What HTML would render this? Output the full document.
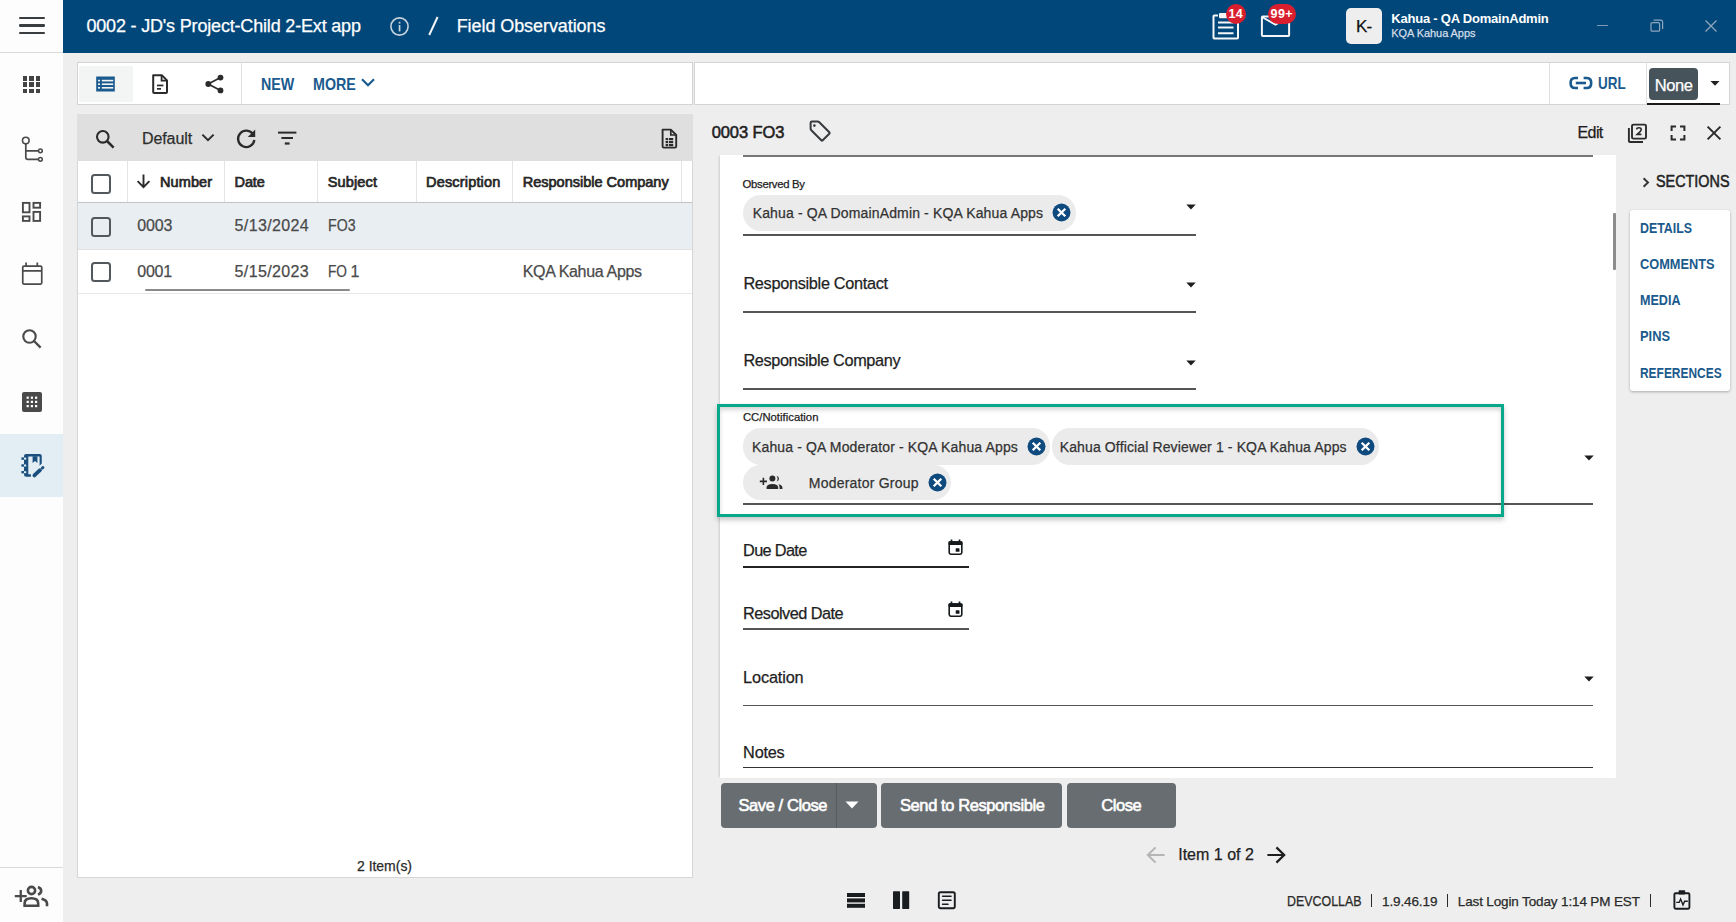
<!DOCTYPE html>
<html><head><meta charset="utf-8"><style>
html,body{margin:0;padding:0;width:1736px;height:922px;overflow:hidden;background:#EEEEEE;font-family:"Liberation Sans",sans-serif;}
.r{position:absolute;box-sizing:border-box;}
.t{position:absolute;white-space:nowrap;line-height:1;-webkit-text-stroke:0.25px currentColor;}
</style></head><body>
<div class="r" style="left:0px;top:0px;width:63px;height:922px;background:#FDFDFD;"></div>
<div class="r" style="left:0px;top:52px;width:63px;height:1px;background:#DADADA;"></div>
<div class="r" style="left:18.5px;top:16.8px;width:26.5px;height:2.3999999999999986px;background:#3A3D40;border-radius:1.2px"></div>
<div class="r" style="left:18.5px;top:24.3px;width:26.5px;height:2.3999999999999986px;background:#3A3D40;border-radius:1.2px"></div>
<div class="r" style="left:18.5px;top:31.8px;width:26.5px;height:2.400000000000002px;background:#3A3D40;border-radius:1.2px"></div>
<div class="r" style="left:22.7px;top:76.0px;width:4.599999999999998px;height:4.599999999999994px;background:#444;"></div>
<div class="r" style="left:22.7px;top:82.4px;width:4.599999999999998px;height:4.599999999999994px;background:#444;"></div>
<div class="r" style="left:22.7px;top:88.8px;width:4.599999999999998px;height:4.599999999999994px;background:#444;"></div>
<div class="r" style="left:29.1px;top:76.0px;width:4.600000000000001px;height:4.599999999999994px;background:#444;"></div>
<div class="r" style="left:29.1px;top:82.4px;width:4.600000000000001px;height:4.599999999999994px;background:#444;"></div>
<div class="r" style="left:29.1px;top:88.8px;width:4.600000000000001px;height:4.599999999999994px;background:#444;"></div>
<div class="r" style="left:35.5px;top:76.0px;width:4.600000000000001px;height:4.599999999999994px;background:#444;"></div>
<div class="r" style="left:35.5px;top:82.4px;width:4.600000000000001px;height:4.599999999999994px;background:#444;"></div>
<div class="r" style="left:35.5px;top:88.8px;width:4.600000000000001px;height:4.599999999999994px;background:#444;"></div>
<svg class="r" style="left:18px;top:132px;" width="28" height="32" viewBox="0 0 28 32"><circle cx="7.8" cy="8.6" r="3.3" fill="none" stroke="#4A4A4A" stroke-width="1.6"/><path d="M7.8 11.9V25.2Q7.8 27.3 9.9 27.3H20.4M7.8 18.8H20.4" fill="none" stroke="#4A4A4A" stroke-width="1.7"/><circle cx="22.4" cy="18.8" r="1.9" fill="none" stroke="#4A4A4A" stroke-width="1.5"/><circle cx="22.4" cy="27.3" r="1.9" fill="none" stroke="#4A4A4A" stroke-width="1.5"/></svg>
<svg class="r" style="left:21px;top:201px;" width="22" height="22" viewBox="0 0 22 22"><g fill="none" stroke="#4A4A4A" stroke-width="1.9"><rect x="1.9" y="1.9" width="6.6" height="9.4"/><rect x="12.5" y="1.9" width="6.6" height="4.8"/><rect x="1.9" y="15.4" width="6.6" height="4.5"/><rect x="12.5" y="10.9" width="6.6" height="9"/></g></svg>
<svg class="r" style="left:21px;top:262px;" width="22" height="24" viewBox="0 0 22 24"><g fill="none" stroke="#4A4A4A" stroke-width="1.7"><rect x="1.75" y="4.05" width="19" height="18" rx="1.2"/><path d="M1.75 8.8H20.75M5.1 0.6V4.5M16.3 0.6V4.5"/></g></svg>
<svg class="r" style="left:20px;top:327px;" width="24" height="24" viewBox="0 0 24 24"><circle cx="9.5" cy="9.5" r="6.2" fill="none" stroke="#4A4A4A" stroke-width="2.1"/><path d="M14 14L20.6 20.6" stroke="#4A4A4A" stroke-width="2.4"/></svg>
<svg class="r" style="left:21px;top:391px;" width="22" height="22" viewBox="0 0 22 22"><rect x="1" y="1" width="20" height="20" rx="2" fill="#4A4A4A"/><rect x="5.6" y="5.6" width="2.2" height="2.2" fill="#fff"/><rect x="5.6" y="9.8" width="2.2" height="2.2" fill="#fff"/><rect x="5.6" y="14.0" width="2.2" height="2.2" fill="#fff"/><rect x="9.8" y="5.6" width="2.2" height="2.2" fill="#fff"/><rect x="9.8" y="9.8" width="2.2" height="2.2" fill="#fff"/><rect x="9.8" y="14.0" width="2.2" height="2.2" fill="#fff"/><rect x="14.0" y="5.6" width="2.2" height="2.2" fill="#fff"/><rect x="14.0" y="9.8" width="2.2" height="2.2" fill="#fff"/><rect x="14.0" y="14.0" width="2.2" height="2.2" fill="#fff"/></svg>
<div class="r" style="left:0px;top:434px;width:63px;height:63px;background:#E3EEF4;"></div>
<svg class="r" style="left:14px;top:446px;" width="36" height="40" viewBox="0 0 36 40"><g fill="#1B4F7E"><path d="M12 8H25.75Q27.75 8 27.75 10V17.6L25.6 19.8V10.4H14.3V28.2H16.9V30.8H12.2Q10 30.8 10 28.6V10Q10 8 12 8Z"/><path d="M18.6 10.2H23.4V16.9L21 15.1 18.6 16.9Z"/><rect x="7.4" y="11.4" width="2.6" height="2.4"/><rect x="7.4" y="18.3" width="2.6" height="2.4"/><rect x="7.4" y="25" width="2.6" height="2.4"/></g><g fill="#E3EEF4"><rect x="10" y="11.6" width="2.2" height="2"/><rect x="10" y="18.5" width="2.2" height="2"/><rect x="10" y="25.2" width="2.2" height="2"/></g><g stroke="#1B4F7E" stroke-linecap="round" fill="none"><path d="M20.4 29.4L26 24.2" stroke-width="3.8"/><path d="M28.4 22L28.9 21.5" stroke-width="3"/></g></svg>
<div class="r" style="left:0px;top:867px;width:63px;height:1px;background:#DADADA;"></div>
<svg class="r" style="left:13px;top:884px;" width="37" height="24" viewBox="0 0 37 24"><g fill="#4A4A4A"><path d="M1.8 10.9H6.6V6.1H8.9V10.9H13.7V13.2H8.9V18H6.6V13.2H1.8Z"/></g><g fill="none" stroke="#4A4A4A" stroke-width="2.6"><circle cx="18.5" cy="6.5" r="3.6"/><path d="M11.6 21.8V19.4Q11.6 14.3 18.4 14.3Q25.2 14.3 25.2 19.4V21.8Z"/><path d="M25 3Q28.2 4.4 28.2 6.8Q28.2 9.4 25 10.6"/><path d="M28.5 14.8Q34 16.2 34 19.6V22.2"/></g></svg>
<div class="r" style="left:63px;top:0px;width:1673px;height:53px;background:#02477A;"></div>
<div class="t" style="left:86.4px;top:17.36px;font-size:18px;font-weight:400;color:#FFFFFF;letter-spacing:-0.176px;">0002 - JD's Project-Child 2-Ext app</div>
<svg class="r" style="left:389px;top:16px;" width="21" height="21" viewBox="0 0 21 21"><circle cx="10.5" cy="10.5" r="8.6" fill="none" stroke="#C9D3DD" stroke-width="1.6"/><rect x="9.7" y="9" width="1.7" height="6.4" fill="#C9D3DD"/><rect x="9.7" y="5.8" width="1.7" height="1.8" fill="#C9D3DD"/></svg>
<svg class="r" style="left:426px;top:16px;" width="15" height="20" viewBox="0 0 15 20"><path d="M11.6 1L3.2 19" stroke="#F2F5F8" stroke-width="2"/></svg>
<div class="t" style="left:456.7px;top:17.46px;font-size:18px;font-weight:400;color:#FFFFFF;letter-spacing:-0.076px;">Field Observations</div>
<svg class="r" style="left:1211px;top:12px;" width="30" height="29" viewBox="0 0 30 29"><g fill="none" stroke="#F4F6F8" stroke-width="2"><path d="M7 3.5H3.2Q2.5 3.5 2.5 4.2V25.8Q2.5 26.5 3.2 26.5H26.2Q27 26.5 27 25.8V4.2Q27 3.5 26.2 3.5H22"/><path d="M7 10.5H22.5M7 15.5H22.5M7 21.3H22.5"/></g><rect x="8" y="1" width="13" height="5.2" rx="1" fill="#F4F6F8"/></svg>
<svg class="r" style="left:1259px;top:12px;" width="34" height="28" viewBox="0 0 34 28"><g fill="none" stroke="#F4F6F8" stroke-width="2"><rect x="2.9" y="4.6" width="27.2" height="19.4" rx="0.8"/><path d="M3 5L16.5 12.6 30 5"/></g></svg>
<div class="r" style="left:1226px;top:3.5px;width:20px;height:20.0px;background:#D91F2D;border-radius:10px"></div>
<div class="t" style="left:1228.6px;top:8.02px;font-size:12.5px;font-weight:700;color:#FFFFFF;letter-spacing:0.248px;-webkit-text-stroke:0;">14</div>
<div class="r" style="left:1268px;top:3.5px;width:27.5px;height:20.0px;background:#D91F2D;border-radius:10px"></div>
<div class="t" style="left:1270.5px;top:8.02px;font-size:12.5px;font-weight:700;color:#FFFFFF;letter-spacing:0.432px;-webkit-text-stroke:0;">99+</div>
<div class="r" style="left:1346px;top:8px;width:36px;height:36px;background:#EEEEEE;border-radius:5px"></div>
<div class="t" style="left:1356.0px;top:18.11px;font-size:17px;font-weight:400;color:#111111;letter-spacing:-0.751px;">K-</div>
<div class="t" style="left:1391.3px;top:12.00px;font-size:13px;font-weight:700;color:#FFFFFF;letter-spacing:-0.215px;-webkit-text-stroke:0;">Kahua - QA DomainAdmin</div>
<div class="t" style="left:1391.3px;top:27.59px;font-size:11px;font-weight:400;color:#D6DEE7;letter-spacing:-0.065px;">KQA Kahua Apps</div>
<div class="r" style="left:1597px;top:25px;width:11px;height:1.3000000000000007px;background:#7F9AB4;"></div>
<svg class="r" style="left:1649px;top:18px;" width="16" height="15" viewBox="0 0 16 15"><g fill="none" stroke="#8FA6BD" stroke-width="1.2"><rect x="2" y="4.6" width="8.6" height="8.6" rx="1.3"/><path d="M4.6 2.2H11.8Q13.6 2.2 13.6 4V11"/></g></svg>
<svg class="r" style="left:1704px;top:19px;" width="14" height="14" viewBox="0 0 14 14"><path d="M1.5 1.5L12.5 12.5M12.5 1.5L1.5 12.5" stroke="#8FA6BD" stroke-width="1.3"/></svg>
<div class="r" style="left:77px;top:62px;width:616px;height:43px;background:#FFFFFF;border:1px solid #D4D4D4"></div>
<div class="r" style="left:78.5px;top:65.5px;width:54.0px;height:36.0px;background:#F3F5F5;"></div>
<svg class="r" style="left:95px;top:75px;" width="21" height="18" viewBox="0 0 21 18"><rect x="1.2" y="1.5" width="18.6" height="15" fill="#1B5A8E"/><g fill="#F3F5F5"><rect x="3" y="4.8" width="2" height="1.6"/><rect x="6.8" y="4.8" width="11.4" height="1.6"/><rect x="3" y="8.4" width="2" height="1.6"/><rect x="6.8" y="8.4" width="11.4" height="1.6"/><rect x="3" y="12" width="2" height="1.6"/><rect x="6.8" y="12" width="11.4" height="1.6"/></g></svg>
<svg class="r" style="left:150px;top:73px;" width="20" height="22" viewBox="0 0 20 22"><path d="M3.2 2.2H11.8L17 7.4V19Q17 20 16 20H4.2Q3.2 20 3.2 19Z" fill="none" stroke="#2B2B2B" stroke-width="2" stroke-linejoin="round"/><path d="M11.6 2.4V7.6H16.8" fill="none" stroke="#2B2B2B" stroke-width="1.8"/><rect x="7" y="11.6" width="6.4" height="1.7" fill="#2B2B2B"/><rect x="7" y="15" width="4" height="1.7" fill="#2B2B2B"/></svg>
<svg class="r" style="left:204px;top:73px;" width="21" height="22" viewBox="0 0 21 22"><g fill="#2B2B2B"><circle cx="16.5" cy="4.6" r="2.9"/><circle cx="4.3" cy="11" r="2.9"/><circle cx="16.5" cy="17.4" r="2.9"/></g><path d="M16.5 4.6L4.3 11 16.5 17.4" fill="none" stroke="#2B2B2B" stroke-width="1.7"/></svg>
<div class="r" style="left:241px;top:63px;width:1px;height:41px;background:#E0E0E0;"></div>
<div class="t" style="left:261.0px;top:75.83px;font-size:16.5px;font-weight:700;color:#1B5A8E;letter-spacing:0.000px;-webkit-text-stroke:0;transform:scaleX(0.8650);transform-origin:0 0;">NEW</div>
<div class="t" style="left:313.3px;top:75.83px;font-size:16.5px;font-weight:700;color:#1B5A8E;letter-spacing:0.000px;-webkit-text-stroke:0;transform:scaleX(0.8646);transform-origin:0 0;">MORE</div>
<svg class="r" style="left:360px;top:77px;" width="16" height="11" viewBox="0 0 16 11"><path d="M2 2.2L8 8.2 14 2.2" fill="none" stroke="#1B5A8E" stroke-width="2.2"/></svg>
<div class="r" style="left:694px;top:62px;width:1036px;height:43px;background:#FFFFFF;border:1px solid #D4D4D4"></div>
<div class="r" style="left:1548.5px;top:63px;width:1.0px;height:41px;background:#E0E0E0;"></div>
<svg class="r" style="left:1568px;top:75px;" width="26" height="16" viewBox="0 0 26 16"><g fill="none" stroke="#1B5A8E" stroke-width="2.6"><path d="M10 3H7Q2.6 3 2.6 8Q2.6 13 7 13H10"/><path d="M15.6 3H18.8Q23.2 3 23.2 8Q23.2 13 18.8 13H15.6"/><path d="M7.8 8H18"/></g></svg>
<div class="t" style="left:1597.9px;top:75.43px;font-size:16.5px;font-weight:700;color:#1B5A8E;letter-spacing:0.000px;-webkit-text-stroke:0;transform:scaleX(0.8168);transform-origin:0 0;">URL</div>
<div class="r" style="left:1645.5px;top:63px;width:1.0px;height:41px;background:#E0E0E0;"></div>
<div class="r" style="left:1648.8px;top:68px;width:49.200000000000045px;height:32px;background:#47535B;border-radius:4px"></div>
<div class="t" style="left:1654.8px;top:76.93px;font-size:16.5px;font-weight:400;color:#FFFFFF;letter-spacing:-0.462px;">None</div>
<div class="r" style="left:1647px;top:102.5px;width:73px;height:2.0px;background:#1A1A1A;"></div>
<svg class="r" style="left:1709px;top:79px;" width="12" height="8" viewBox="0 0 12 8"><path d="M1.5 2H10.5L6 6.8Z" fill="#222"/></svg>
<div class="r" style="left:77px;top:114px;width:616px;height:764px;background:#FFFFFF;border:1px solid #D6D6D6;border-top:none"></div>
<div class="r" style="left:77px;top:114px;width:616px;height:46.5px;background:#DFDFDF;"></div>
<svg class="r" style="left:94px;top:128px;" width="22" height="22" viewBox="0 0 22 22"><circle cx="8.8" cy="8.8" r="5.8" fill="none" stroke="#2B2B2B" stroke-width="2.1"/><path d="M13 13L19.6 19.6" stroke="#2B2B2B" stroke-width="2.5"/></svg>
<div class="t" style="left:142.0px;top:130.56px;font-size:16px;font-weight:400;color:#2E2E2E;letter-spacing:-0.099px;">Default</div>
<svg class="r" style="left:199px;top:131px;" width="18" height="13" viewBox="0 0 18 13"><path d="M3.4 3.6L9 9.2 14.6 3.6" fill="none" stroke="#2B2B2B" stroke-width="2"/></svg>
<svg class="r" style="left:234.2px;top:127px;" width="24" height="23" viewBox="0 0 24 23"><path d="M19.2 7.4A8.2 8.2 0 1 0 20.4 13" fill="none" stroke="#2B2B2B" stroke-width="2.3"/><path d="M21.2 2.6V10H13.8Z" fill="#2B2B2B"/></svg>
<svg class="r" style="left:276px;top:129px;" width="22" height="18" viewBox="0 0 22 18"><g fill="#2B2B2B"><rect x="2" y="2.6" width="18.4" height="2"/><rect x="5.4" y="8" width="11.6" height="2"/><rect x="8.8" y="13.4" width="4.8" height="2.2"/></g></svg>
<svg class="r" style="left:660px;top:128px;" width="19" height="21" viewBox="0 0 19 21"><path d="M2.6 1.6H10.8L16.2 7V18.4Q16.2 19.6 15 19.6H3.8Q2.6 19.6 2.6 18.4Z" fill="none" stroke="#2B2B2B" stroke-width="1.9" stroke-linejoin="round"/><path d="M10.8 1.8V7H16" fill="none" stroke="#2B2B2B" stroke-width="1.7"/><g fill="#2B2B2B"><rect x="5.6" y="10" width="2.6" height="2.2"/><rect x="9" y="10" width="4.2" height="2.2"/><rect x="5.6" y="13" width="2.6" height="2.2"/><rect x="9" y="13" width="4.2" height="2.2"/><rect x="5.6" y="16" width="2.6" height="2.2"/><rect x="9" y="16" width="4.2" height="2.2"/></g></svg>
<div class="r" style="left:78px;top:160.5px;width:614px;height:41.5px;background:#FFFFFF;"></div>
<div class="r" style="left:127px;top:160.5px;width:1px;height:41.5px;background:#E4E4E4;"></div>
<div class="r" style="left:224px;top:160.5px;width:1px;height:41.5px;background:#E4E4E4;"></div>
<div class="r" style="left:317px;top:160.5px;width:1px;height:41.5px;background:#E4E4E4;"></div>
<div class="r" style="left:416px;top:160.5px;width:1px;height:41.5px;background:#E4E4E4;"></div>
<div class="r" style="left:512px;top:160.5px;width:1px;height:41.5px;background:#E4E4E4;"></div>
<div class="r" style="left:681px;top:160.5px;width:1px;height:41.5px;background:#E4E4E4;"></div>
<div class="r" style="left:78px;top:201.5px;width:614px;height:1.5px;background:#C4C4C4;box-shadow:0 1px 3px rgba(0,0,0,0.12)"></div>
<div class="r" style="left:90.5px;top:173.5px;width:20.0px;height:20.0px;background:transparent;border:2px solid #53585C;border-radius:3.5px"></div>
<svg class="r" style="left:135px;top:173px;" width="17" height="16" viewBox="0 0 17 16"><path d="M8.5 1.5V14M2.6 8.2L8.5 14.2 14.4 8.2" fill="none" stroke="#2B2B2B" stroke-width="1.9"/></svg>
<div class="t" style="left:160.0px;top:174.63px;font-size:14.5px;font-weight:400;color:#262626;letter-spacing:0.104px;-webkit-text-stroke:0.7px #262626">Number</div>
<div class="t" style="left:234.6px;top:174.63px;font-size:14.5px;font-weight:400;color:#262626;letter-spacing:-0.157px;-webkit-text-stroke:0.7px #262626">Date</div>
<div class="t" style="left:327.7px;top:174.63px;font-size:14.5px;font-weight:400;color:#262626;letter-spacing:0.162px;-webkit-text-stroke:0.7px #262626">Subject</div>
<div class="t" style="left:426.0px;top:174.63px;font-size:14.5px;font-weight:400;color:#262626;letter-spacing:0.179px;-webkit-text-stroke:0.7px #262626">Description</div>
<div class="t" style="left:522.7px;top:174.63px;font-size:14.5px;font-weight:400;color:#262626;letter-spacing:0.006px;-webkit-text-stroke:0.7px #262626">Responsible Company</div>
<div class="r" style="left:78px;top:203px;width:614px;height:45.5px;background:#E9EEF2;"></div>
<div class="r" style="left:78px;top:248.5px;width:614px;height:1.0px;background:#E2E2E2;"></div>
<div class="r" style="left:78px;top:292.5px;width:614px;height:1.0px;background:#E8E8E8;"></div>
<div class="r" style="left:90.5px;top:216.5px;width:20.0px;height:20.0px;background:transparent;border:2px solid #53585C;border-radius:3.5px"></div>
<div class="r" style="left:90.5px;top:261.8px;width:20.0px;height:20.0px;background:transparent;border:2px solid #53585C;border-radius:3.5px"></div>
<div class="t" style="left:137.3px;top:218.46px;font-size:16px;font-weight:400;color:#4A4A4A;letter-spacing:-0.149px;">0003</div>
<div class="t" style="left:234.6px;top:218.46px;font-size:16px;font-weight:400;color:#4A4A4A;letter-spacing:0.358px;">5/13/2024</div>
<div class="t" style="left:328.0px;top:218.46px;font-size:16px;font-weight:400;color:#4A4A4A;letter-spacing:0.000px;transform:scaleX(0.8837);transform-origin:0 0;">FO3</div>
<div class="t" style="left:137.3px;top:263.86px;font-size:16px;font-weight:400;color:#4A4A4A;letter-spacing:-0.274px;">0001</div>
<div class="t" style="left:234.6px;top:263.86px;font-size:16px;font-weight:400;color:#4A4A4A;letter-spacing:0.358px;">5/15/2023</div>
<div class="t" style="left:328.3px;top:263.86px;font-size:16px;font-weight:400;color:#4A4A4A;letter-spacing:0.000px;transform:scaleX(0.8551);transform-origin:0 0;">FO</div>
<div class="t" style="left:350.6px;top:263.86px;font-size:16px;font-weight:400;color:#4A4A4A;letter-spacing:0.000px;">1</div>
<div class="t" style="left:522.7px;top:263.86px;font-size:16px;font-weight:400;color:#4A4A4A;letter-spacing:-0.332px;">KQA Kahua Apps</div>
<div class="r" style="left:145px;top:288.5px;width:205px;height:2.5px;background:#8A8A8A;border-radius:2px"></div>
<div class="t" style="left:357.0px;top:858.75px;font-size:14px;font-weight:400;color:#2A2A2A;letter-spacing:-0.025px;">2 Item(s)</div>
<div class="r" style="left:693px;top:105px;width:1043px;height:817px;background:#EEEEEE;"></div>
<div class="t" style="left:711.7px;top:124.33px;font-size:16.5px;font-weight:400;color:#1E1E1E;letter-spacing:-0.098px;-webkit-text-stroke:0.55px #1E1E1E">0003 FO3</div>
<svg class="r" style="left:807px;top:119px;" width="26" height="25" viewBox="0 0 26 25"><path d="M5 2.6H10.6Q11.6 2.6 12.3 3.3L22.3 13.3Q23 14 22.3 14.7L15.7 21.3Q15 22 14.3 21.3L4.3 11.3Q3.6 10.6 3.6 9.6V4Q3.6 2.6 5 2.6Z" fill="none" stroke="#383B3E" stroke-width="2" stroke-linejoin="round"/><circle cx="7.4" cy="6.6" r="1.3" fill="#383B3E"/></svg>
<div class="t" style="left:1577.6px;top:125.16px;font-size:16px;font-weight:400;color:#1E1E1E;letter-spacing:-0.643px;">Edit</div>
<svg class="r" style="left:1626px;top:122px;" width="22" height="22" viewBox="0 0 22 22"><g fill="none" stroke="#2B2B2B" stroke-width="1.9"><rect x="6" y="2.6" width="14" height="14" rx="1.4"/><path d="M2.9 6V19Q2.9 20 3.9 20H17"/></g><path d="M10.6 7.4Q10.8 5.8 13 5.8Q15.2 5.8 15.2 7.6Q15.2 8.8 13.6 10.2L11.2 12.4H15.4" fill="none" stroke="#2B2B2B" stroke-width="1.6"/></svg>
<svg class="r" style="left:1669px;top:124px;" width="18" height="18" viewBox="0 0 18 18"><path d="M2.6 7V2.6H7M11 2.6H15.4V7M15.4 11V15.4H11M7 15.4H2.6V11" fill="none" stroke="#2B2B2B" stroke-width="2"/></svg>
<svg class="r" style="left:1705px;top:124px;" width="18" height="18" viewBox="0 0 18 18"><path d="M2.6 2.6L15.4 15.4M15.4 2.6L2.6 15.4" fill="none" stroke="#2B2B2B" stroke-width="2"/></svg>
<div class="r" style="left:719.5px;top:155px;width:896.5px;height:623px;background:#FFFFFF;box-shadow:-2px 0 2px -1px rgba(0,0,0,0.14)"></div>
<div class="r" style="left:742.8px;top:154.5px;width:850.2px;height:2.0px;background:#777777;"></div>
<div class="r" style="left:1612.5px;top:213px;width:3.5px;height:56.5px;background:#8C8C8C;border-radius:1px"></div>
<div class="t" style="left:742.6px;top:178.83px;font-size:11.3px;font-weight:400;color:#222;letter-spacing:-0.302px;">Observed By</div>
<div class="r" style="left:743px;top:195px;width:332.5px;height:35.80000000000001px;background:#EBEBEB;border-radius:18px"></div>
<div class="t" style="left:752.7px;top:206.15px;font-size:14px;font-weight:400;color:#333;letter-spacing:0.145px;">Kahua - QA DomainAdmin - KQA Kahua Apps</div>
<svg class="r" style="left:1052.0px;top:203.3px;" width="19" height="19" viewBox="0 0 19 19"><circle cx="9.5" cy="9.5" r="9" fill="#0E4A7E"/><path d="M5.7 5.7L13.3 13.3M13.3 5.7L5.7 13.3" stroke="#FFFFFF" stroke-width="2.3"/></svg>
<svg class="r" style="left:1186px;top:204.2px;" width="10" height="6" viewBox="0 0 10 6"><path d="M0.3 0.4H9.7L5 5.6Z" fill="#1E1E1E"/></svg>
<div class="r" style="left:743px;top:233.8px;width:453px;height:2.0px;background:#555555;"></div>
<div class="t" style="left:743.4px;top:274.70px;font-size:16.3px;font-weight:400;color:#1E1E1E;letter-spacing:-0.306px;">Responsible Contact</div>
<svg class="r" style="left:1186px;top:282.2px;" width="10" height="6" viewBox="0 0 10 6"><path d="M0.3 0.4H9.7L5 5.6Z" fill="#1E1E1E"/></svg>
<div class="r" style="left:743px;top:310.8px;width:453px;height:1.8000000000000114px;background:#555555;"></div>
<div class="t" style="left:743.4px;top:351.90px;font-size:16.3px;font-weight:400;color:#1E1E1E;letter-spacing:-0.368px;">Responsible Company</div>
<svg class="r" style="left:1186px;top:360px;" width="10" height="6" viewBox="0 0 10 6"><path d="M0.3 0.4H9.7L5 5.6Z" fill="#1E1E1E"/></svg>
<div class="r" style="left:743px;top:387.9px;width:453px;height:1.8000000000000114px;background:#555555;"></div>
<div class="t" style="left:742.9px;top:412.13px;font-size:11.3px;font-weight:400;color:#222;letter-spacing:0.016px;">CC/Notification</div>
<div class="r" style="left:743px;top:428.2px;width:306.5px;height:36.400000000000034px;background:#EBEBEB;border-radius:18px"></div>
<div class="t" style="left:752.0px;top:440.15px;font-size:14px;font-weight:400;color:#333;letter-spacing:0.143px;">Kahua - QA Moderator - KQA Kahua Apps</div>
<svg class="r" style="left:1027.1px;top:437.1px;" width="19" height="19" viewBox="0 0 19 19"><circle cx="9.5" cy="9.5" r="9" fill="#0E4A7E"/><path d="M5.7 5.7L13.3 13.3M13.3 5.7L5.7 13.3" stroke="#FFFFFF" stroke-width="2.3"/></svg>
<div class="r" style="left:1051.5px;top:427.8px;width:327.5px;height:36.80000000000001px;background:#EBEBEB;border-radius:18px"></div>
<div class="t" style="left:1059.7px;top:440.15px;font-size:14px;font-weight:400;color:#333;letter-spacing:0.132px;">Kahua Official Reviewer 1 - KQA Kahua Apps</div>
<svg class="r" style="left:1356.2px;top:437.1px;" width="19" height="19" viewBox="0 0 19 19"><circle cx="9.5" cy="9.5" r="9" fill="#0E4A7E"/><path d="M5.7 5.7L13.3 13.3M13.3 5.7L5.7 13.3" stroke="#FFFFFF" stroke-width="2.3"/></svg>
<div class="r" style="left:743px;top:465.2px;width:208px;height:34.60000000000002px;background:#EBEBEB;border-radius:18px"></div>
<svg class="r" style="left:759px;top:474px;" width="24" height="16" viewBox="0 0 24 16"><g fill="#2A2A2A"><path d="M0.8 6.6H3.6V3.8H5.2V6.6H8V8.2H5.2V11H3.6V8.2H0.8Z"/><circle cx="13.4" cy="4.6" r="3"/><path d="M7.6 15V13.6Q7.6 10 13.4 10Q19.2 10 19.2 13.6V15Z"/><path d="M17.4 1.8Q20 2.4 20 4.8Q20 7 17.6 7.6Q18.6 6.4 18.6 4.7Q18.6 3 17.4 1.8Z"/><path d="M19.4 10.2Q23.4 11 23.4 13.6V15H20.6V13.6Q20.6 11.6 19.4 10.2Z"/></g></svg>
<div class="t" style="left:808.8px;top:476.25px;font-size:14px;font-weight:400;color:#333;letter-spacing:0.226px;">Moderator Group</div>
<svg class="r" style="left:928.3px;top:473.1px;" width="19" height="19" viewBox="0 0 19 19"><circle cx="9.5" cy="9.5" r="9" fill="#0E4A7E"/><path d="M5.7 5.7L13.3 13.3M13.3 5.7L5.7 13.3" stroke="#FFFFFF" stroke-width="2.3"/></svg>
<svg class="r" style="left:1584px;top:455.4px;" width="10" height="6" viewBox="0 0 10 6"><path d="M0.3 0.4H9.7L5 5.6Z" fill="#1E1E1E"/></svg>
<div class="r" style="left:743px;top:503.2px;width:850px;height:1.8000000000000114px;background:#555555;"></div>
<div class="r" style="left:717px;top:404px;width:787px;height:113px;background:transparent;border:3px solid #08A88A;box-shadow:0 3px 5px rgba(0,0,0,0.22), inset 0 3px 4px rgba(0,0,0,0.16)"></div>
<div class="t" style="left:743.1px;top:542.20px;font-size:16.3px;font-weight:400;color:#1E1E1E;letter-spacing:-0.670px;">Due Date</div>
<svg class="r" style="left:946px;top:538px;" width="19" height="19" viewBox="0 0 19 19"><rect x="3.2" y="4.1" width="12.6" height="12.1" rx="1.6" fill="none" stroke="#15191C" stroke-width="1.6"/><rect x="2.4" y="3.3" width="14.2" height="3.6" rx="1.2" fill="#15191C"/><path d="M5.5 1.6V4M13.5 1.6V4" stroke="#15191C" stroke-width="1.7"/><rect x="9.7" y="10.3" width="3.8" height="3.5" rx="0.6" fill="#15191C"/></svg>
<div class="r" style="left:743px;top:565.6px;width:226px;height:2.0px;background:#222222;"></div>
<div class="t" style="left:743.1px;top:604.80px;font-size:16.3px;font-weight:400;color:#1E1E1E;letter-spacing:-0.532px;">Resolved Date</div>
<svg class="r" style="left:946px;top:600px;" width="19" height="19" viewBox="0 0 19 19"><rect x="3.2" y="4.1" width="12.6" height="12.1" rx="1.6" fill="none" stroke="#15191C" stroke-width="1.6"/><rect x="2.4" y="3.3" width="14.2" height="3.6" rx="1.2" fill="#15191C"/><path d="M5.5 1.6V4M13.5 1.6V4" stroke="#15191C" stroke-width="1.7"/><rect x="9.7" y="10.3" width="3.8" height="3.5" rx="0.6" fill="#15191C"/></svg>
<div class="r" style="left:743px;top:627.8px;width:226px;height:2.0px;background:#555555;"></div>
<div class="t" style="left:743.1px;top:668.90px;font-size:16.3px;font-weight:400;color:#1E1E1E;letter-spacing:-0.141px;">Location</div>
<svg class="r" style="left:1584px;top:676px;" width="10" height="6" viewBox="0 0 10 6"><path d="M0.3 0.4H9.7L5 5.6Z" fill="#1E1E1E"/></svg>
<div class="r" style="left:743px;top:704.6px;width:850px;height:1.7999999999999545px;background:#555555;"></div>
<div class="t" style="left:743.1px;top:743.90px;font-size:16.3px;font-weight:400;color:#1E1E1E;letter-spacing:-0.216px;">Notes</div>
<div class="r" style="left:743px;top:766.6px;width:850px;height:1.7999999999999545px;background:#333333;"></div>
<svg class="r" style="left:1640px;top:176px;" width="12" height="13" viewBox="0 0 12 13"><path d="M3.6 2.2L8 6.5 3.6 10.8" fill="none" stroke="#333" stroke-width="1.9"/></svg>
<div class="t" style="left:1656.0px;top:174.36px;font-size:16px;font-weight:400;color:#222;letter-spacing:0.000px;transform:scaleX(0.8986);transform-origin:0 0;-webkit-text-stroke:0.5px #222">SECTIONS</div>
<div class="r" style="left:1630px;top:210px;width:100px;height:180.5px;background:#FFFFFF;border-radius:3px;box-shadow:0 1px 3px rgba(0,0,0,0.28)"></div>
<div class="t" style="left:1639.6px;top:220.73px;font-size:14.5px;font-weight:700;color:#1A5A8C;letter-spacing:0.000px;-webkit-text-stroke:0;transform:scaleX(0.8531);transform-origin:0 0;">DETAILS</div>
<div class="t" style="left:1639.6px;top:257.13px;font-size:14.5px;font-weight:700;color:#1A5A8C;letter-spacing:0.000px;-webkit-text-stroke:0;transform:scaleX(0.8808);transform-origin:0 0;">COMMENTS</div>
<div class="t" style="left:1639.6px;top:293.13px;font-size:14.5px;font-weight:700;color:#1A5A8C;letter-spacing:0.000px;-webkit-text-stroke:0;transform:scaleX(0.8668);transform-origin:0 0;">MEDIA</div>
<div class="t" style="left:1639.6px;top:329.33px;font-size:14.5px;font-weight:700;color:#1A5A8C;letter-spacing:0.000px;-webkit-text-stroke:0;transform:scaleX(0.8864);transform-origin:0 0;">PINS</div>
<div class="t" style="left:1639.6px;top:365.73px;font-size:14.5px;font-weight:700;color:#1A5A8C;letter-spacing:0.000px;-webkit-text-stroke:0;transform:scaleX(0.8234);transform-origin:0 0;">REFERENCES</div>
<div class="r" style="left:720.5px;top:783px;width:156.20000000000005px;height:44.5px;background:#676D71;border-radius:4px"></div>
<div class="r" style="left:836px;top:783px;width:1px;height:44.5px;background:#555B5F;"></div>
<div class="t" style="left:738.5px;top:797.03px;font-size:16.5px;font-weight:400;color:#FFFFFF;letter-spacing:-0.421px;-webkit-text-stroke:0.6px #FFFFFF">Save / Close</div>
<svg class="r" style="left:845px;top:801px;" width="14" height="8" viewBox="0 0 14 8"><path d="M0.5 0.6H13.5L7 7.4Z" fill="#FFFFFF"/></svg>
<div class="r" style="left:881.4px;top:783px;width:181.10000000000002px;height:44.5px;background:#676D71;border-radius:4px"></div>
<div class="t" style="left:900.0px;top:797.03px;font-size:16.5px;font-weight:400;color:#FFFFFF;letter-spacing:-0.409px;-webkit-text-stroke:0.6px #FFFFFF">Send to Responsible</div>
<div class="r" style="left:1067.2px;top:783px;width:108.39999999999986px;height:44.5px;background:#676D71;border-radius:4px"></div>
<div class="t" style="left:1101.2px;top:797.03px;font-size:16.5px;font-weight:400;color:#FFFFFF;letter-spacing:-0.437px;-webkit-text-stroke:0.6px #FFFFFF">Close</div>
<svg class="r" style="left:1145px;top:845px;" width="21" height="20" viewBox="0 0 21 20"><path d="M19.6 10H3.4M10.6 2.4L2.8 10 10.6 17.6" fill="none" stroke="#B4B4B4" stroke-width="2"/></svg>
<div class="t" style="left:1178.2px;top:847.26px;font-size:16px;font-weight:400;color:#222;letter-spacing:0.010px;">Item 1 of 2</div>
<svg class="r" style="left:1266px;top:845px;" width="21" height="20" viewBox="0 0 21 20"><path d="M1.4 10H17.6M10.4 2.4L18.2 10 10.4 17.6" fill="none" stroke="#1E1E1E" stroke-width="2.2"/></svg>
<svg class="r" style="left:846px;top:892px;" width="20" height="17" viewBox="0 0 20 17"><g fill="#1A1D20"><rect x="1" y="1" width="18" height="4"/><rect x="1" y="6.4" width="18" height="4"/><rect x="1" y="11.8" width="18" height="4"/></g></svg>
<svg class="r" style="left:892px;top:890px;" width="18" height="20" viewBox="0 0 18 20"><g fill="#1A1D20"><rect x="1" y="1.3" width="7" height="17.6" rx="0.6"/><rect x="10.2" y="1.3" width="7" height="17.6" rx="0.6"/></g></svg>
<svg class="r" style="left:937px;top:890px;" width="20" height="20" viewBox="0 0 20 20"><rect x="1.8" y="2.2" width="16" height="16" rx="1.6" fill="none" stroke="#1A1D20" stroke-width="1.9"/><g fill="#1A1D20"><rect x="4.8" y="5.4" width="10" height="1.6" rx="0.8"/><rect x="4.8" y="9.4" width="10" height="1.6" rx="0.8"/><rect x="4.8" y="13.4" width="7" height="1.6" rx="0.8"/></g></svg>
<div class="t" style="left:1287.3px;top:893.83px;font-size:14.5px;font-weight:400;color:#2A2A2A;letter-spacing:0.000px;transform:scaleX(0.8559);transform-origin:0 0;">DEVCOLLAB</div>
<div class="r" style="left:1371px;top:894px;width:1px;height:13px;background:#2A2A2A;"></div>
<div class="t" style="left:1382.0px;top:894.67px;font-size:13.5px;font-weight:400;color:#2A2A2A;letter-spacing:-0.111px;">1.9.46.19</div>
<div class="r" style="left:1447px;top:894px;width:1px;height:13px;background:#2A2A2A;"></div>
<div class="t" style="left:1457.8px;top:894.67px;font-size:13.5px;font-weight:400;color:#2A2A2A;letter-spacing:-0.138px;">Last Login Today 1:14 PM EST</div>
<div class="r" style="left:1650px;top:894px;width:1px;height:13px;background:#2A2A2A;"></div>
<svg class="r" style="left:1672px;top:889px;" width="20" height="21" viewBox="0 0 20 21"><rect x="2.4" y="4.2" width="15" height="15.6" rx="1.2" fill="none" stroke="#1A1D20" stroke-width="1.9"/><rect x="6.6" y="1.2" width="6.6" height="4.4" rx="0.8" fill="#1A1D20"/><path d="M4.2 13.4H7.2L8.6 10 11 16 12.6 12.2H15.8" fill="none" stroke="#1A1D20" stroke-width="1.4"/></svg>
</body></html>
